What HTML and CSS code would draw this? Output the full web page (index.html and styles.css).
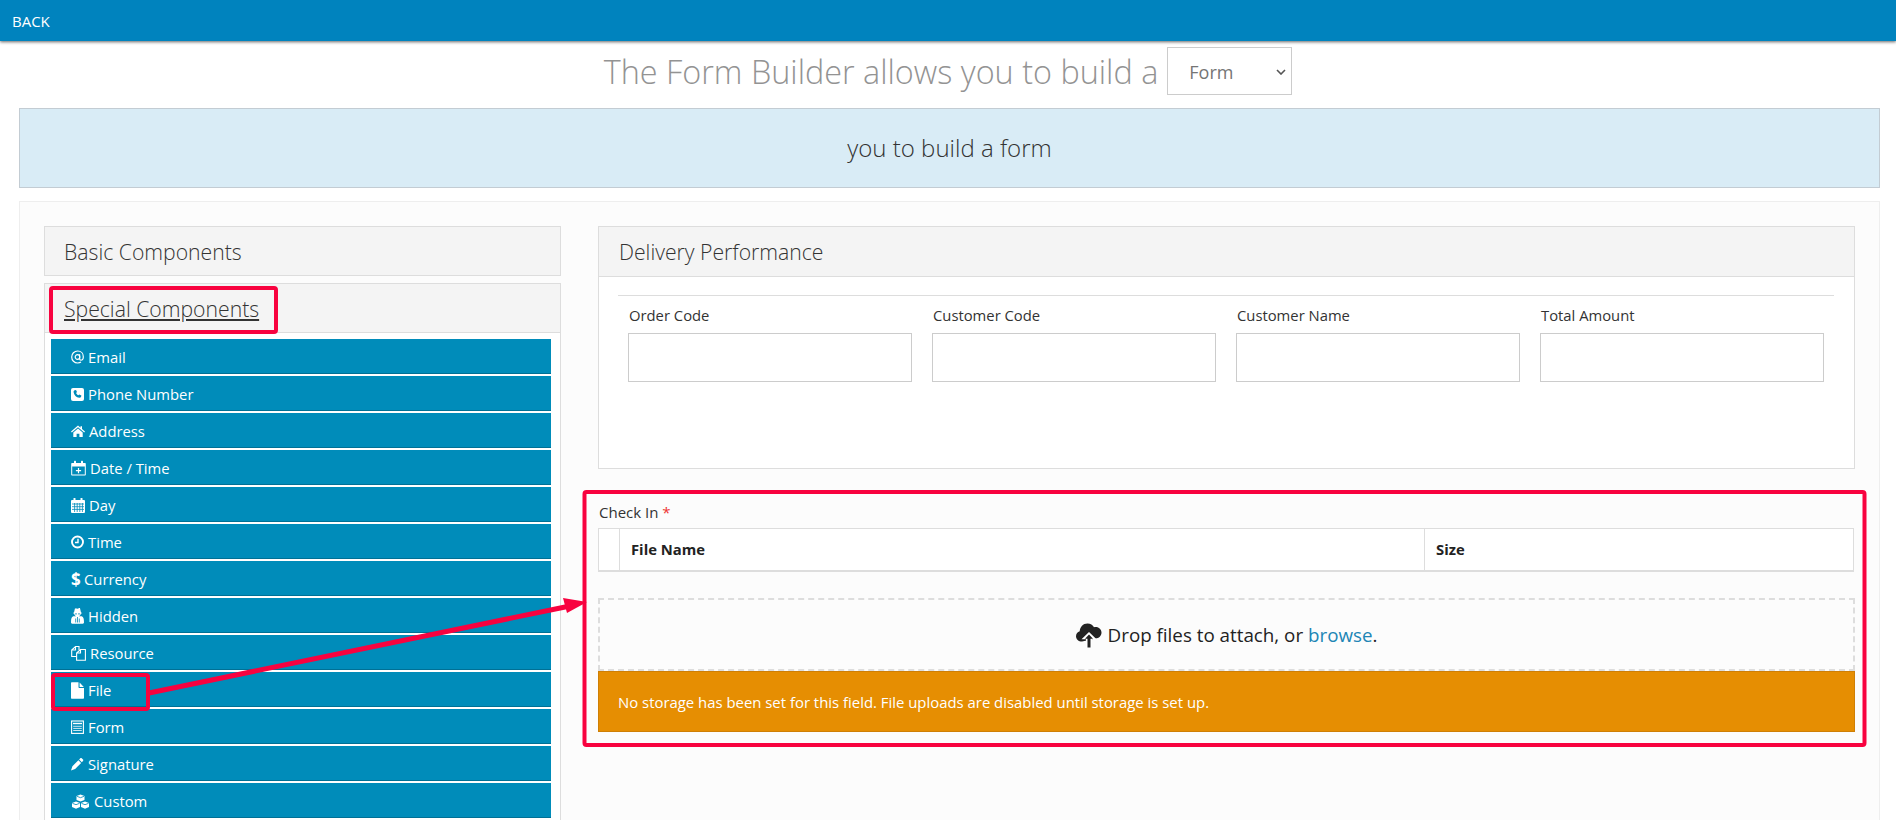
FILE: index.html
```html
<!DOCTYPE html>
<html lang="en">
<head>
  <meta charset="UTF-8" />
  <title>Form Builder</title>
  <link rel="stylesheet" href="styles.css">
</head>
<body>

<div class="topbar"><a class="back-link">BACK</a></div>

<div class="page-title">
  <span>The Form Builder allows you to build a</span>
  <div class="type-select">
    <span>Form</span>
    <svg width="10" height="6" viewBox="0 0 10 6"><path d="M1 1l4 4 4-4" fill="none" stroke="#555" stroke-width="1.6"/></svg>
  </div>
</div>

<div class="info-box">you to build a form</div>

<div class="builder">
  <!-- left column -->
  <div class="sidebar">
    <div class="panel panel-basic">
      <div class="panel-heading">Basic Components</div>
    </div>
    <div class="panel panel-special">
      <div class="panel-heading"><a class="underlined">Special Components</a></div>
      <div class="btn-list">
        <a class="comp-btn"><svg width="13" height="14" viewBox="0 0 13 14"><path d="M8.6 4.3v4.4c0 1 .5 1.5 1.3 1.5 1.5 0 2.4-1.6 2.4-3.5C12.300 3.500 10 1 6.700 1 3.300 1 .7 3.600 .7 7s2.600 6 6 6c1.300 0 2.400-.3 3.300-.9" fill="none" stroke="#fff" stroke-width="1.200"/><circle cx="6.500" cy="7" r="2.300" fill="none" stroke="#fff" stroke-width="1.200"/></svg>Email</a>
        <a class="comp-btn"><svg width="13" height="14" viewBox="0 0 13 14"><rect y="1" width="13" height="13" rx="2" fill="#fff"/><path d="M3.700 3.300L5 3l1 2.100-.9.900c.5 1.100 1.200 1.800 2.300 2.300l.9-.9L10.400 8.400l-.3 1.300c-.3.8-1 1.200-1.900 1.100C5.200 10.300 3.100 8.200 2.600 5.200c-.1-.9.300-1.600 1.100-1.900z" fill="#008cba"/></svg>Phone Number</a>
        <a class="comp-btn"><svg width="14" height="14" viewBox="0 0 14 14"><path d="M7 1.500l2.500 2.200V2.300H11V5l3 2.600-.8.900L7 3.200.8 8.500 0 7.600zM2.300 8.500L7 4.500l4.700 4V13H8.400V9.800H5.600V13H2.300z" fill="#fff"/></svg>Address</a>
        <a class="comp-btn"><svg width="15" height="16" viewBox="0 0 15 16"><path d="M1 3h13a.8.8 0 0 1 .8.800v11a.8.8 0 0 1-.8.800H1a.8.8 0 0 1-.8-.800v-11A.8.8 0 0 1 1 3zm.2 3.500v8.100h12.600V6.500z" fill="#fff"/><rect x="3" y="0.800" width="2" height="3.600" rx=".6" fill="#fff"/><rect x="10" y="0.800" width="2" height="3.600" rx=".6" fill="#fff"/><path d="M7.500 8v5.200M4.900 10.600h5.200" stroke="#fff" stroke-width="1.200"/></svg>Date / Time</a>
        <a class="comp-btn"><svg width="14" height="16" viewBox="0 0 14 16"><path d="M1 3h12a1 1 0 0 1 1 1v11a1 1 0 0 1-1 1H1a1 1 0 0 1-1-1V4a1 1 0 0 1 1-1z" fill="#fff"/><rect x="2.500" y="1" width="2" height="3.600" rx=".6" fill="#fff"/><rect x="9.500" y="1" width="2" height="3.600" rx=".6" fill="#fff"/><path d="M1 7h12M1 9.700h12M1 12.400h12M3.600 6v9M6.200 6v9M8.800 6v9M11.400 6v9" stroke="#008cba" stroke-width=".8"/></svg>Day</a>
        <a class="comp-btn"><svg width="13" height="14" viewBox="0 0 13 14"><circle cx="6.500" cy="7" r="5.500" fill="none" stroke="#fff" stroke-width="1.900"/><path d="M7 3.800V7.500H4" fill="none" stroke="#fff" stroke-width="1.400"/></svg>Time</a>
        <a class="comp-btn"><span class="dollar">$</span>Currency</a>
        <a class="comp-btn"><svg width="13" height="16" viewBox="0 0 13 16"><path d="M4 .3c.9.5 4.100.5 5 0l1 4.200 1.300.6-1.500.7c-.2 1.700-1.600 2.700-3.300 2.700S3.400 7.500 3.200 5.800L1.700 5.100 3 4.500zM2.200 8.200h8.600c1.500.6 2.200 2.200 2.200 6.100 0 .9-.4 1.400-1.200 1.400H1.200C.4 15.700 0 15.200 0 14.300c0-3.900.7-5.500 2.200-6.100z" fill="#fff"/><path d="M4 5.900h2M7 5.900h2M6.500 9v5.500M4.700 10.500v4M8.300 10.500v4" stroke="#008cba" stroke-width=".8" fill="none"/></svg>Hidden</a>
        <a class="comp-btn"><svg width="15" height="16" viewBox="0 0 15 16"><path d="M5.500 11.500H.7V5L4.500 1.500H8V5M4.500 1.500V5H.7" fill="none" stroke="#fff" stroke-width="1.100"/><path d="M5.600 15.300V8L9.500 4.500h4.900v10.800zM9.500 4.500V8H5.600" fill="none" stroke="#fff" stroke-width="1.100"/></svg>Resource</a>
        <a class="comp-btn"><svg width="13" height="17" viewBox="0 0 13 17"><path d="M0 1.200C0 .6.400.2 1 .2h6.500V5c0 .6.400 1 1 1H13v9.800c0 .6-.4 1-1 1H1c-.6 0-1-.4-1-1zM8.600.4L12.800 4.900H8.600z" fill="#fff"/></svg>File</a>
        <a class="comp-btn"><svg width="13" height="14" viewBox="0 0 13 14"><rect x=".6" y="1" width="11.800" height="12.400" fill="none" stroke="#fff" stroke-width="1.100"/><path d="M2 2.800h9v1.400H2z" fill="#fff"/><path d="M2.200 6.300h8.600M2.200 8.400h8.600M2.200 10.500h8.600" stroke="#fff" stroke-width=".8"/></svg>Form</a>
        <a class="comp-btn"><svg width="13" height="14" viewBox="0 0 13 14"><path d="M9.300 1.300c.4-.4 1-.4 1.400 0l1.300 1.300c.4.400.4 1 0 1.400l-1.200 1.200L8.100 2.500zM7.400 3.200l2.700 2.700-6 6L0 13.500l1.400-4.300z" fill="#fff"/></svg>Signature</a>
        <a class="comp-btn"><svg width="19" height="15" viewBox="0 0 19 15"><path d="M9.500 .5l4 1.500v4l-4 1.600-4-1.600V2zM5 7.500l4 1.500v4l-4 1.700L1 13V9zM14 7.500l4 1.500v4l-4 1.700L10 13V9z" fill="#fff"/><path d="M5.900 2.300l3.600 1.400 3.600-1.400M1.400 9.300L5 10.700l3.600-1.400M10.400 9.300l3.600 1.400 3.600-1.400" fill="none" stroke="#008cba" stroke-width=".8"/></svg>Custom</a>
      </div>
    </div>
  </div>

  <!-- right column -->
  <div class="form-area">
    <div class="panel panel-form">
      <div class="panel-heading">Delivery Performance</div>
      <div class="panel-body">
        <div class="rule"></div>
        <div class="fields">
          <div class="field"><label>Order Code</label><input type="text"></div>
          <div class="field"><label>Customer Code</label><input type="text"></div>
          <div class="field"><label>Customer Name</label><input type="text"></div>
          <div class="field"><label>Total Amount</label><input type="text"></div>
        </div>
      </div>
    </div>

    <div class="file-field">
      <div class="file-label">Check In <span class="req">*</span></div>
      <table class="file-table">
        <tr><th class="col-x"></th><th class="col-name">File Name</th><th>Size</th></tr>
      </table>
      <div class="dropzone">
        <svg width="26" height="25" viewBox="0 0 26 25"><path d="M6 18.500C2.500 18.500 0 16.200 0 13.200c0-2.500 1.600-4.300 3.700-4.900C4 4 7 .5 11.500 .5c3 0 5.300 1.500 6.500 3.800 .6-.2 1.200-.3 1.800-.3 3.200 0 5.700 2.500 5.700 5.600 0 3.400-2.500 5.900-6 5.900z" fill="#222"/><path d="M13 9l7.500 7.200H16v8h-6v-8H5.500z" fill="#fff"/><path d="M13 11.500l4 4.200h-2.500v8.800h-3v-8.800H9z" fill="#222"/></svg>
        <span>Drop files to attach, or <a class="browse">browse</a>.</span>
      </div>
      <div class="warning">No storage has been set for this field. File uploads are disabled until storage is set up.</div>
    </div>
  </div>
</div>

<!-- red marks drawn on top of the screenshot -->
<svg class="marks" width="1896" height="820" viewBox="0 0 1896 820">
  <rect x="51" y="288" width="225" height="44" rx="2"/>
  <rect x="53" y="675" width="95" height="34" rx="2"/>
  <rect x="584.500" y="492" width="1280" height="253" rx="2"/>
  <path class="arrow-line" d="M149 693L570 606"/>
  <polygon class="head" points="587,602 563,598 567,613"/>
</svg>

</body>
</html>
```

FILE: styles.css
```css
html, body {
  margin: 0;
  padding: 0;
  height: 820px;
  overflow: hidden;
  background: #fff;
  font-family: "Open Sans", "Liberation Sans", sans-serif;
  font-size: 15px;
  color: #222;
}

.topbar {
  height: 41px;
  background: #0083be;
  box-shadow: 0 1px 3px rgba(0, 0, 0, 0.6);
  display: flex;
  align-items: center;
  padding-left: 12px;
  position: relative;
}

.back-link {
  color: #fff;
  font-size: 15px;
}

.page-title {
  display: flex;
  justify-content: center;
  align-items: center;
  gap: 9px;
  margin-top: 6px;
  height: 48px;
  font-size: 32.400px;
  font-weight: 300;
  color: #939393;
}

.type-select {
  box-sizing: border-box;
  width: 125px;
  height: 48px;
  border: 1px solid #ccc;
  background: #fff;
  display: flex;
  align-items: center;
  justify-content: space-between;
  padding: 2px 5px 0 21px;
  font-size: 18px;
  font-weight: 400;
  color: #757575;
}

.info-box {
  box-sizing: border-box;
  margin: 13px 16px 0 19px;
  height: 80px;
  background: #d9ecf6;
  border: 1px solid #c3ccd3;
  display: flex;
  align-items: center;
  justify-content: center;
  padding-bottom: 1px;
  font-size: 24px;
  font-weight: 300;
  color: #333;
}

.builder {
  box-sizing: border-box;
  margin: 13px 16px 0 19px;
  height: 640px;
  padding: 24px 24px 0;
  background: #fcfcfc;
  border: 1px solid #eee;
  border-bottom: none;
  display: grid;
  grid-template-columns: 517px 1fr;
  column-gap: 37px;
  align-items: start;
}

.panel {
  box-sizing: border-box;
  border: 1px solid #ddd;
  background: #fff;
}

.panel-heading {
  height: 48px;
  box-sizing: border-box;
  display: flex;
  align-items: center;
  padding-left: 19px;
  background: #f4f4f4;
  font-size: 21.200px;
  font-weight: 300;
  color: #333;
}

.panel-basic {
  margin-bottom: 7px;
}

.panel-special .panel-heading {
  height: 49px;
  border-bottom: 1px solid #ddd;
}

.underlined {
  text-decoration: underline;
}

.btn-list {
  display: flex;
  flex-direction: column;
  gap: 2px;
  padding: 6px 9px 10px 6px;
}

.comp-btn {
  box-sizing: border-box;
  height: 35px;
  background: #008cba;
  border-bottom: 1px solid #007095;
  color: #fff;
  display: flex;
  align-items: center;
  gap: 4px;
  padding: 2px 0 0 20px;
  font-size: 14.800px;
}

.comp-btn svg {
  flex-shrink: 0;
}

.dollar {
  width: 9px;
  font-size: 17px;
  font-weight: 700;
}

.panel-form {
  height: 243px;
}

.panel-form .panel-heading {
  height: 50px;
  padding-left: 20px;
  border-bottom: 1px solid #ddd;
}

.panel-body {
  padding: 18px 20px 0 19px;
}

.rule {
  border-top: 1px solid #ddd;
}

.fields {
  display: grid;
  grid-template-columns: repeat(4, 284px);
  column-gap: 20px;
  padding: 9px 0 0 10px;
}

.field label {
  display: block;
  height: 28px;
  line-height: 21px;
  font-size: 14.800px;
  color: #333;
  padding-left: 1px;
}

.field input {
  box-sizing: border-box;
  display: block;
  width: 284px;
  height: 49px;
  border: 1px solid #ccc;
  background: #fff;
  margin: 0;
}

.file-field {
  margin-top: 33px;
}

.file-label {
  height: 26px;
  line-height: 21px;
  padding-left: 1px;
  color: #333;
}

.req {
  color: #e33;
}

.file-table {
  width: calc(100% - 1px);
  height: 44px;
  box-sizing: border-box;
  border-collapse: collapse;
  border: 1px solid #ddd;
  border-bottom: 2px solid #ddd;
  background: #fff;
}

.file-table th {
  text-align: left;
  padding: 0 11px 1px;
  border-left: 1px solid #ddd;
  font-size: 14.800px;
  font-weight: 700;
}

.file-table .col-x {
  width: 20px;
  padding: 0;
  border-left: none;
}

.file-table .col-name {
  width: 782px;
}

.dropzone {
  box-sizing: border-box;
  margin-top: 26px;
  height: 73px;
  border: 2px dashed #ddd;
  display: flex;
  align-items: center;
  justify-content: center;
  gap: 6px;
  padding-top: 1px;
  font-size: 18.800px;
}

.browse {
  color: #2085b5;
}

.warning {
  box-sizing: border-box;
  height: 61px;
  background: #e68e02;
  border: 1px solid #cf7f05;
  color: #fff;
  display: flex;
  align-items: center;
  padding-left: 19px;
  font-size: 14.900px;
}

.marks {
  position: absolute;
  top: 0;
  left: 0;
  pointer-events: none;
}

.marks rect, .marks path {
  fill: none;
  stroke: #f8023f;
  stroke-width: 4;
}

.marks .arrow-line {
  stroke-width: 5;
}

.marks .head {
  fill: #f8023f;
}
```
